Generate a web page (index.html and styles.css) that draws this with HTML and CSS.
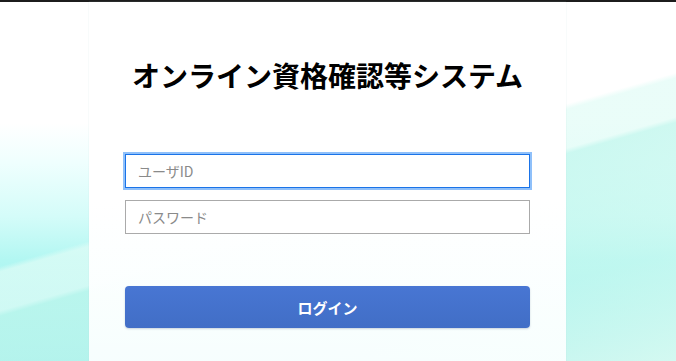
FILE: index.html
```html
<!DOCTYPE html>
<html lang="ja">
<head>
<meta charset="utf-8">
<title>オンライン資格確認等システム</title>
<link rel="stylesheet" href="styles.css">
</head>
<body>
<div class="topbar"></div>
<main class="page">
  <section class="card">
    <h1 class="title">オンライン資格確認等システム</h1>
    <form class="form">
      <input class="field field-focus" type="text" placeholder="ユーザID">
      <input class="field" type="password" placeholder="パスワード">
      <button class="login" type="button">ログイン</button>
    </form>
  </section>
</main>
</body>
</html>
```
FILE: styles.css
```css
html, body {
  margin: 0;
  padding: 0;
  height: 100%;
}
body {
  font-family: "Noto Sans CJK JP", "Noto Sans", sans-serif;
  overflow: hidden;
  background:
    linear-gradient(164deg, rgba(255,255,255,0) 0%, rgba(255,255,255,0) 48%, rgba(225,252,246,0.7) 49%, rgba(225,252,246,0.7) 56%, rgba(190,246,236,0.75) 57%, rgba(205,248,238,0.5) 80%, rgba(222,251,242,0.85) 100%),
    linear-gradient(to bottom, #ffffff 0%, #ffffff 34%, #effffe 45%, #d4fcf9 60%, #b2f7f2 72%, #a4f2ef 88%, #98edec 100%);
}
.topbar {
  height: 2px;
  background: #1c1c1c;
}
.page {
  width: 655px;
  display: flex;
  justify-content: center;
  height: calc(100% - 2px);
}
.card {
  width: 405px;
  padding: 53px 36px 0;
  background: linear-gradient(to bottom, #ffffff 0%, #ffffff 55%, rgba(250,255,255,0.95) 100%);
  box-shadow: 0 0 1px rgba(180, 210, 210, 0.5);
}
.title {
  margin: 0 -10px;
  font-size: 28px;
  line-height: 40px;
  font-weight: 700;
  color: #000;
  text-align: center;
  white-space: nowrap;
}
.form {
  display: flex;
  flex-direction: column;
  margin-top: 59px;
}
.field {
  box-sizing: border-box;
  width: 100%;
  height: 34px;
  margin: 0 0 12px;
  padding: 0 12px;
  border: 1px solid #aaaaaa;
  border-radius: 0;
  background: #fff;
  font-family: "Noto Sans CJK JP", sans-serif;
  font-size: 14px;
  color: #333;
  outline: none;
}
.field::placeholder {
  color: #8a8a8a;
}
.field-focus {
  border-color: #1a73e8;
  box-shadow: 0 0 0 2px #8fc0fa;
}
.login {
  margin-top: 40px;
  height: 42px;
  width: 100%;
  border: none;
  border-radius: 4px;
  background: linear-gradient(to bottom, #4876d3, #416ec6);
  box-shadow: 0 1px 2px rgba(60, 80, 120, 0.25);
  color: #fff;
  font-family: "Noto Sans CJK JP", sans-serif;
  font-size: 15px;
  font-weight: 700;
  cursor: pointer;
}
```
